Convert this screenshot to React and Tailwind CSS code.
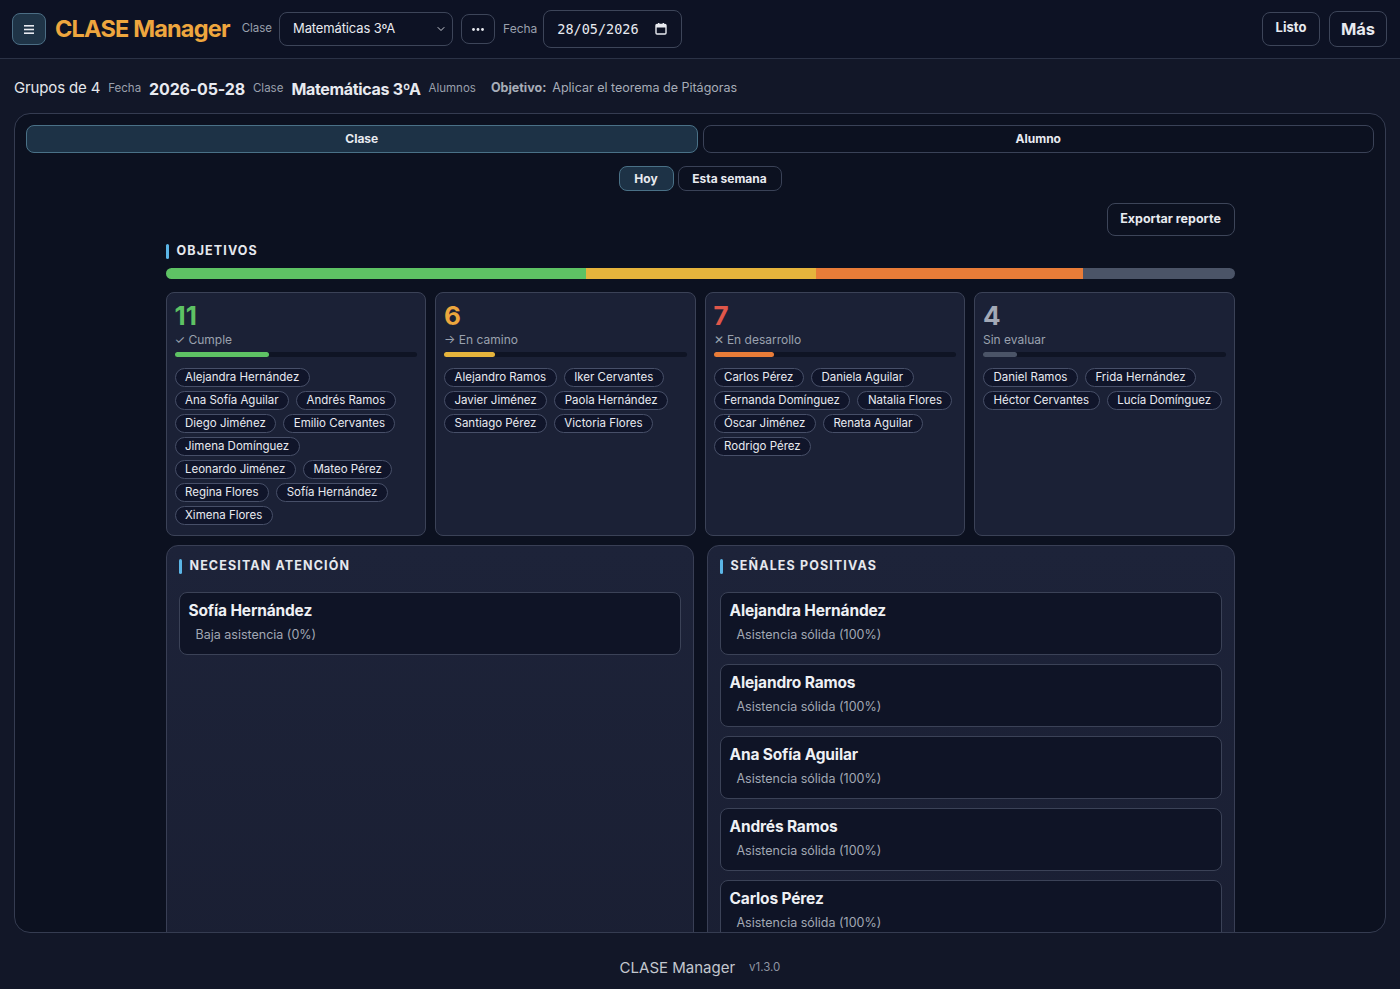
import { ChevronDown } from 'lucide-react'

const groups = [
    {
        count: 11,
        label: '✓ Cumple',
        color: 'text-[#5ec264]',
        fill: 'bg-[#5ec264]',
        pct: 39,
        names: ['Alejandra Hernández', 'Ana Sofía Aguilar', 'Andrés Ramos', 'Diego Jiménez', 'Emilio Cervantes', 'Jimena Domínguez', 'Leonardo Jiménez', 'Mateo Pérez', 'Regina Flores', 'Sofía Hernández', 'Ximena Flores'],
    },
    {
        count: 6,
        label: '→ En camino',
        color: 'text-[#eca63d]',
        fill: 'bg-[#e6b43c]',
        pct: 21,
        names: ['Alejandro Ramos', 'Iker Cervantes', 'Javier Jiménez', 'Paola Hernández', 'Santiago Pérez', 'Victoria Flores'],
    },
    {
        count: 7,
        label: '✕ En desarrollo',
        color: 'text-[#e0574a]',
        fill: 'bg-[#e97c38]',
        pct: 25,
        names: ['Carlos Pérez', 'Daniela Aguilar', 'Fernanda Domínguez', 'Natalia Flores', 'Óscar Jiménez', 'Renata Aguilar', 'Rodrigo Pérez'],
    },
    {
        count: 4,
        label: 'Sin evaluar',
        color: 'text-[#a3a9b6]',
        fill: 'bg-[#4b5467]',
        pct: 14,
        names: ['Daniel Ramos', 'Frida Hernández', 'Héctor Cervantes', 'Lucía Domínguez'],
    },
]

const positives = ['Alejandra Hernández', 'Alejandro Ramos', 'Ana Sofía Aguilar', 'Andrés Ramos', 'Carlos Pérez', 'Daniela Aguilar', 'Diego Jiménez']

function SectionTitle({ children }) {
    return (
        <div className="flex items-center gap-[8px] h-[16px]">
            <span className="w-[3px] h-[15px] bg-[#5bb5e6] rounded-sm" />
            <span className="text-[12.5px] font-bold tracking-[0.09em] text-[#e6e8ee]">{children}</span>
        </div>
    )
}

function GroupCard({ group }) {
    return (
        <div className="rounded-lg border border-[#3b4257] bg-[#1b2136] px-[8px] pt-[10px] pb-3 h-[244px]">
            <div className={`text-[26px] font-bold leading-none ${group.color}`}>{group.count}</div>
            <div className="text-[12px] text-[#9aa1ae] mt-[3px] leading-[16px]">{group.label}</div>
            <div className="h-[5px] rounded-full bg-[#0f1424] mt-[4px]">
                <div className={`h-full rounded-full ${group.fill}`} style={{ width: `${group.pct}%` }} />
            </div>
            <div className="flex flex-wrap gap-x-[7px] gap-y-[4px] mt-[11px]">
                {group.names.map((n) => (
                    <span key={n} className="h-[19px] px-[9.5px] rounded-full border border-[#474f68] bg-[#10152a] text-[11.5px] leading-[17px] text-[#e8eaf0]">
                        {n}
                    </span>
                ))}
            </div>
        </div>
    )
}

function PersonItem({ name, note }) {
    return (
        <div className="h-[63px] rounded-lg border border-[#3b4257] bg-[#0f1426] pl-[9px] pt-[7px]">
            <div className="text-[15.5px] font-bold text-[#eef0f4] leading-[22px] tracking-[-0.01em]">{name}</div>
            <div className="text-[12.5px] text-[#a2a8b4] ml-[7px] mt-[3px] leading-[20px]">{note}</div>
        </div>
    )
}

export default function App() {
    return (
        <div className="h-[989px] flex flex-col bg-[#121728] font-[Inter,sans-serif] text-[#e8eaf0] overflow-hidden">
            {/* Header */}
            <header className="h-[59px] shrink-0 flex items-center px-3 bg-[#0d1224] border-b border-[#2b3246]">
                <button className="w-[34px] h-[32px] rounded-lg bg-[#1f3447] border border-[#4b6d84] flex items-center justify-center">
                    <svg width="10" height="9" viewBox="0 0 10 9">
                        <rect x="0" y="0" width="10" height="1.6" fill="#e8eaf0" />
                        <rect x="0" y="3.7" width="10" height="1.6" fill="#e8eaf0" />
                        <rect x="0" y="7.4" width="10" height="1.6" fill="#e8eaf0" />
                    </svg>
                </button>
                <span className="ml-[9px] text-[23.5px] font-bold text-[#eea63e] tracking-[-0.035em]">CLASE Manager</span>
                <span className="ml-[12px] text-[11.5px] text-[#9aa0ad]">Clase</span>
                <div className="ml-[7px] w-[174px] h-[34px] rounded-lg border border-[#3d4559] flex items-center justify-between pl-[13px] pr-[5px]">
                    <span className="text-[13px] tracking-[-0.01em]">Matemáticas 3ºA</span>
                    <ChevronDown size={12} strokeWidth={2} className="text-[#c9ccd4]" />
                </div>
                <button className="ml-[8px] w-[34px] h-[30px] rounded-lg border border-[#3d4559] flex items-center justify-center">
                    <svg width="12" height="3" viewBox="0 0 12 3">
                        <circle cx="1.5" cy="1.5" r="1.4" fill="#e8eaf0" />
                        <circle cx="6" cy="1.5" r="1.4" fill="#e8eaf0" />
                        <circle cx="10.5" cy="1.5" r="1.4" fill="#e8eaf0" />
                    </svg>
                </button>
                <span className="ml-[8px] text-[12px] text-[#9aa0ad]">Fecha</span>
                <div className="ml-[6px] w-[139px] h-[38px] rounded-lg border border-[#3d4559] flex items-center justify-between pl-[13px] pr-[14px]">
                    <span className="font-['DejaVu_Sans_Mono',monospace] text-[13.5px]">28/05/2026</span>
                    <svg width="12" height="12" viewBox="0 0 12 12">
                        <rect x="1" y="1.5" width="10" height="9.5" rx="1" fill="none" stroke="#e8eaf0" strokeWidth="1.4" />
                        <rect x="1" y="1.5" width="10" height="3" fill="#e8eaf0" />
                        <rect x="3" y="0" width="1.4" height="2.5" fill="#e8eaf0" />
                        <rect x="7.6" y="0" width="1.4" height="2.5" fill="#e8eaf0" />
                    </svg>
                </div>
                <div className="ml-auto flex items-center gap-[9px] pr-[1px]">
                    <button className="w-[58px] h-[34px] rounded-lg border border-[#3d4559] text-[13px] font-bold pb-[3px]">Listo</button>
                    <button className="w-[58px] h-[36px] rounded-lg border border-[#3d4559] text-[16.5px] font-bold">Más</button>
                </div>
            </header>

            {/* Info row */}
            <div className="h-[54px] shrink-0 flex items-center px-[14px] gap-[8px] pt-[5px]">
                <span className="text-[15px] text-[#e5e7ec] tracking-[-0.01em]">Grupos de 4</span>
                <span className="text-[11.5px] text-[#9aa0ad]">Fecha</span>
                <span className="text-[16px] font-bold tracking-[-0.01em]">2026-05-28</span>
                <span className="text-[11.5px] text-[#9aa0ad]">Clase</span>
                <span className="text-[16px] font-bold tracking-[-0.02em]">Matemáticas 3ºA</span>
                <span className="text-[11.5px] text-[#9aa0ad]">Alumnos</span>
                <span className="ml-[7px] text-[12.5px] font-bold text-[#a7adb8]">Objetivo:</span>
                <span className="text-[12.5px] text-[#a7adb8] -ml-[2px]">Aplicar el teorema de Pitágoras</span>
            </div>

            {/* Main container */}
            <main className="h-[820px] shrink-0 mx-[14px] rounded-2xl border border-[#353c51] bg-[#0c1120] overflow-hidden px-[11px] pt-[11px]">
                <div className="grid grid-cols-2 gap-[5px]">
                    <button className="h-[28px] rounded-lg border border-[#4a7187] bg-[#1d3246] text-[12px] font-bold">Clase</button>
                    <button className="h-[28px] rounded-lg border border-[#3a4257] text-[12px] font-bold">Alumno</button>
                </div>
                <div className="flex justify-center gap-[4px] mt-[13px]">
                    <button className="w-[55px] h-[25px] rounded-lg border border-[#4a7187] bg-[#1d3246] text-[12px] font-bold">Hoy</button>
                    <button className="w-[104px] h-[25px] rounded-lg border border-[#3a4257] text-[12px] font-bold">Esta semana</button>
                </div>

                <div className="w-[1069px] mx-auto">
                    <div className="flex justify-end mt-[12px]">
                        <button className="w-[128px] h-[33px] rounded-lg border border-[#3d4559] text-[12.5px] font-bold">Exportar reporte</button>
                    </div>

                    <div className="mt-[7px]">
                        <SectionTitle>OBJETIVOS</SectionTitle>
                    </div>

                    <div className="flex h-[11px] rounded-full overflow-hidden mt-[9px]">
                        <div className="bg-[#5ec264] w-[420px]" />
                        <div className="bg-[#e6b43c] w-[230px]" />
                        <div className="bg-[#e97c38] w-[267px]" />
                        <div className="bg-[#4b5467] flex-1" />
                    </div>

                    <div className="grid grid-cols-4 gap-[9px] mt-[13px]">
                        {groups.map((g) => (
                            <GroupCard key={g.label} group={g} />
                        ))}
                    </div>

                    <div className="grid grid-cols-2 gap-[13px] mt-[9px]">
                        <section className="h-[420px] rounded-xl border border-[#393f55] bg-gradient-to-b from-[#1d2339] to-[#1a1f33] px-[12px] pt-[12px]">
                            <SectionTitle>NECESITAN ATENCIÓN</SectionTitle>
                            <div className="flex flex-col gap-[9px] mt-[18px]">
                                <PersonItem name="Sofía Hernández" note="Baja asistencia (0%)" />
                            </div>
                        </section>
                        <section className="h-[420px] rounded-xl border border-[#393f55] bg-gradient-to-b from-[#1d2339] to-[#1a1f33] px-[12px] pt-[12px]">
                            <SectionTitle>SEÑALES POSITIVAS</SectionTitle>
                            <div className="flex flex-col gap-[9px] mt-[18px]">
                                {positives.map((p) => (
                                    <PersonItem key={p} name={p} note="Asistencia sólida (100%)" />
                                ))}
                            </div>
                        </section>
                    </div>
                </div>
            </main>

            {/* Footer */}
            <footer className="flex-1 flex items-center justify-center gap-[14px] pt-[14px]">
                <span className="text-[15px] text-[#c3c7cf]">CLASE Manager</span>
                <span className="text-[11.5px] text-[#8f95a2]">v1.3.0</span>
            </footer>
        </div>
    )
}
